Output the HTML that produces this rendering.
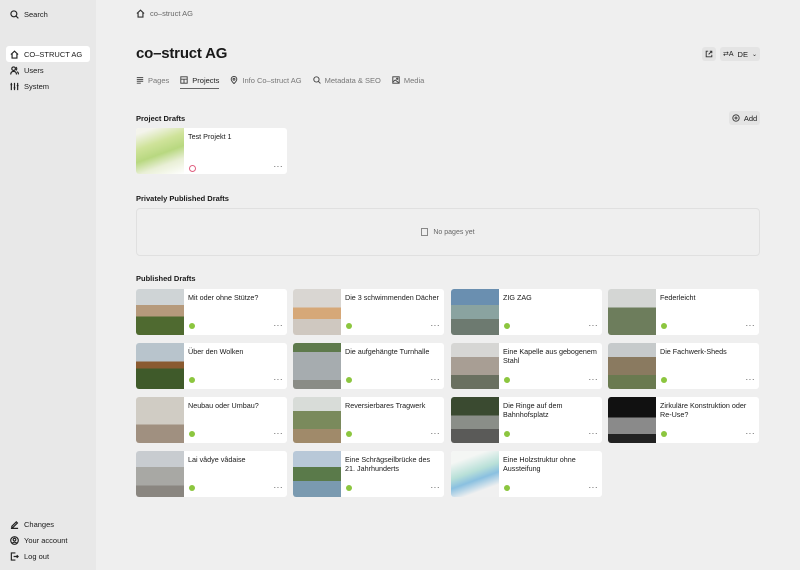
<!DOCTYPE html>
<html><head><meta charset="utf-8"><style>
*{box-sizing:border-box;margin:0;padding:0}
body{width:800px;height:570px;overflow:hidden;background:#efefef;font-family:"Liberation Sans",sans-serif;color:#1a1a1a;position:relative;font-size:8px}
.side{position:absolute;left:0;top:0;width:96px;height:570px;background:#e8e8e8}
.si{position:absolute;left:6px;height:16px;display:flex;align-items:center;gap:5px;padding-left:4px;font-size:7.5px;width:84px}
.si svg{width:9px;height:9px;stroke:#222;fill:none;stroke-width:1.3}
.act{background:#fff;border-radius:3px}
.abs{position:absolute}
h1{position:absolute;left:136px;top:45px;font-size:15px;font-weight:bold;letter-spacing:-0.2px}
.tabs{position:absolute;left:136px;top:74px;display:flex;gap:11px;font-size:7.5px;color:#777}
.tabs span{display:flex;align-items:center;gap:4px;height:12px}
.tabs svg{width:8px;height:8px;stroke:#444;fill:none;stroke-width:1.2}
.tabs .on{color:#222;border-bottom:1.5px solid #666;padding-bottom:2px;height:15px}
.sec{position:absolute;left:136px;font-size:7.5px;font-weight:bold}
.card{position:absolute;width:151px;height:46px;background:#fff;border-radius:3px;overflow:hidden}
.card .im{position:absolute;left:0;top:0;width:48px;height:46px}
.card .t{position:absolute;left:52px;top:4px;font-size:7.2px;line-height:9px;width:95px}
.card .d{position:absolute;left:53px;top:34px;width:6px;height:6px;border-radius:50%;background:#8cc63f}
.card .m{position:absolute;right:4px;top:32px;font-size:8px;letter-spacing:0.5px;color:#333}
.btn{position:absolute;background:#e4e4e4;border-radius:3px;display:flex;align-items:center;justify-content:center;font-size:7.5px;gap:4px}
</style></head><body>
<div class="side">
<div class="si" style="top:6px"><svg viewBox="0 0 10 10"><circle cx="4.3" cy="4.3" r="3.3"/><path d="M6.8 6.8L9.3 9.3"/></svg>Search</div>
<div class="si act" style="top:46px"><svg viewBox="0 0 10 10"><path d="M1 5L5 1.3 9 5M2.3 4v5h5.4V4"/></svg>CO–STRUCT AG</div>
<div class="si" style="top:62px"><svg viewBox="0 0 10 10"><circle cx="4" cy="3" r="2"/><path d="M0.8 9.5c0-2.5 1.5-3.5 3.2-3.5s3.2 1 3.2 3.5M6.5 1.3a2 2 0 010 3.5M8 6.3c1 .5 1.4 1.6 1.4 3"/></svg>Users</div>
<div class="si" style="top:78px"><svg viewBox="0 0 10 10"><path d="M1.5 1v8M5 1v8M8.5 1v8M0.5 3h2M4 6.5h2M7.5 4h2"/></svg>System</div>
<div class="si" style="top:516px"><svg viewBox="0 0 10 10"><path d="M1 9.3h8M2 7l5-5 1.3 1.3-5 5H2z"/></svg>Changes</div>
<div class="si" style="top:532px"><svg viewBox="0 0 10 10"><circle cx="5" cy="5" r="4.2"/><circle cx="5" cy="4" r="1.5"/><path d="M2.5 8c1-1.5 4-1.5 5 0"/></svg>Your account</div>
<div class="si" style="top:548px"><svg viewBox="0 0 10 10"><path d="M6 1H1.5v8H6M4 5h5M7.5 3.5L9 5 7.5 6.5"/></svg>Log out</div>
</div>
<div class="abs" style="left:136px;top:9px;font-size:7.5px;color:#666;display:flex;align-items:center;gap:5px"><svg width="9" height="9" viewBox="0 0 10 10" fill="none" stroke="#333" stroke-width="1.3"><path d="M1 5L5 1.3 9 5M2.3 4v5h5.4V4"/></svg>co–struct AG</div>
<h1>co–struct AG</h1>
<div class="btn" style="left:702px;top:47px;width:14px;height:14px"><svg width="8" height="8" viewBox="0 0 10 10" fill="none" stroke="#333" stroke-width="1.2"><path d="M4 1.5H1.5v7h7V6M6 1.5h2.5V4M8.5 1.5L4.5 5.5"/></svg></div>
<div class="btn" style="left:720px;top:47px;width:40px;height:14px"><span style="font-size:7px">⇄A</span>DE <span style="font-size:6px">⌄</span></div>
<div class="tabs">
<span><svg viewBox="0 0 10 10"><path d="M1 2h8M1 4.3h8M1 6.6h8M1 9h5"/></svg>Pages</span>
<span class="on"><svg viewBox="0 0 10 10"><rect x="1" y="1" width="8" height="8"/><path d="M1 4h8M5 4v5"/></svg>Projects</span>
<span><svg viewBox="0 0 10 10"><path d="M5 9.5S1.5 6 1.5 4a3.5 3.5 0 017 0C8.5 6 5 9.5 5 9.5z"/><circle cx="5" cy="4" r="1.2"/></svg>Info Co–struct AG</span>
<span><svg viewBox="0 0 10 10"><circle cx="4.3" cy="4.3" r="3.3"/><path d="M6.8 6.8L9.3 9.3"/></svg>Metadata &amp; SEO</span>
<span><svg viewBox="0 0 10 10"><rect x="1" y="1" width="8" height="8"/><path d="M1 7.5L4 5l4.5 3.5"/><circle cx="6.5" cy="3.5" r="0.8"/></svg>Media</span>
</div>
<div class="sec" style="top:114px">Project Drafts</div>
<div class="btn" style="left:729px;top:111px;width:31px;height:14px"><svg width="8" height="8" viewBox="0 0 10 10" fill="none" stroke="#333" stroke-width="1.1"><circle cx="5" cy="5" r="4"/><path d="M5 3v4M3 5h4"/></svg>Add</div>
<div class="card" style="left:136px;top:128px"><div class="im" style="background:linear-gradient(160deg,#f4f4ec 10%,#cfe39a 35%,#b8d880 55%,#e9efd6 75%,#fff)"></div><div class="t">Test Projekt 1</div><div class="d" style="background:none;border:1px solid #e06080;width:7px;height:7px;top:37px"></div><div class="m" style="top:34px">···</div></div>
<div class="sec" style="top:194px">Privately Published Drafts</div>
<div class="abs" style="left:136px;top:208px;width:624px;height:48px;border:1px solid #e0e0e0;border-radius:4px;display:flex;align-items:center;justify-content:center;font-size:7px;color:#666;gap:5px"><span style="display:inline-block;width:7px;height:8px;border:1px solid #888"></span>No pages yet</div>
<div class="sec" style="top:274px">Published Drafts</div>

<div class="card" style="left:136px;top:289px"><div class="im" style="background:linear-gradient(180deg,#cfd4d6 0 35%,#b69a7c 35% 60%,#4f6a30 60%)"></div><div class="t">Mit oder ohne Stütze?</div><div class="d"></div><div class="m">···</div></div>
<div class="card" style="left:293px;top:289px"><div class="im" style="background:linear-gradient(180deg,#d9d6d2 0 40%,#d6a878 40% 65%,#cfc8c0 65%)"></div><div class="t">Die 3 schwimmenden Dächer</div><div class="d"></div><div class="m">···</div></div>
<div class="card" style="left:451px;top:289px"><div class="im" style="background:linear-gradient(180deg,#6a8fb0 0 35%,#8aa3a0 35% 65%,#6d7a70 65%)"></div><div class="t">ZIG ZAG</div><div class="d"></div><div class="m">···</div></div>
<div class="card" style="left:608px;top:289px"><div class="im" style="background:linear-gradient(180deg,#d4d6d4 0 40%,#6d7d5c 40%)"></div><div class="t">Federleicht</div><div class="d"></div><div class="m">···</div></div>

<div class="card" style="left:136px;top:343px"><div class="im" style="background:linear-gradient(180deg,#b8c4cc 0 40%,#8a5a30 40% 55%,#3f5a2a 55%)"></div><div class="t">Über den Wolken</div><div class="d"></div><div class="m">···</div></div>
<div class="card" style="left:293px;top:343px"><div class="im" style="background:linear-gradient(180deg,#5e7a4c 0 20%,#a6acaf 20% 80%,#8a8c86 80%)"></div><div class="t">Die aufgehängte Turnhalle</div><div class="d"></div><div class="m">···</div></div>
<div class="card" style="left:451px;top:343px"><div class="im" style="background:linear-gradient(180deg,#d6d6d4 0 30%,#a89e94 30% 70%,#6a7060 70%)"></div><div class="t">Eine Kapelle aus gebogenem Stahl</div><div class="d"></div><div class="m">···</div></div>
<div class="card" style="left:608px;top:343px"><div class="im" style="background:linear-gradient(180deg,#c6cacb 0 30%,#8a7a60 30% 70%,#6a7a50 70%)"></div><div class="t">Die Fachwerk-Sheds</div><div class="d"></div><div class="m">···</div></div>

<div class="card" style="left:136px;top:397px"><div class="im" style="background:linear-gradient(180deg,#d0ccc4 0 60%,#a09080 60%)"></div><div class="t">Neubau oder Umbau?</div><div class="d"></div><div class="m">···</div></div>
<div class="card" style="left:293px;top:397px"><div class="im" style="background:linear-gradient(180deg,#d8dcd8 0 30%,#7a8a5c 30% 70%,#a08a6a 70%)"></div><div class="t">Reversierbares Tragwerk</div><div class="d"></div><div class="m">···</div></div>
<div class="card" style="left:451px;top:397px"><div class="im" style="background:linear-gradient(180deg,#3a4a30 0 40%,#8a8e88 40% 70%,#5a5a58 70%)"></div><div class="t">Die Ringe auf dem Bahnhofsplatz</div><div class="d"></div><div class="m">···</div></div>
<div class="card" style="left:608px;top:397px"><div class="im" style="background:linear-gradient(180deg,#111 0 45%,#8a8a8a 45% 80%,#222 80%)"></div><div class="t">Zirkuläre Konstruktion oder Re-Use?</div><div class="d"></div><div class="m">···</div></div>

<div class="card" style="left:136px;top:451px"><div class="im" style="background:linear-gradient(180deg,#c8ccd0 0 35%,#a8a8a4 35% 75%,#8a8680 75%)"></div><div class="t">Lai vâdye vâdaise</div><div class="d"></div><div class="m">···</div></div>
<div class="card" style="left:293px;top:451px"><div class="im" style="background:linear-gradient(180deg,#b8c8d8 0 35%,#5a7a4a 35% 65%,#7a9ab0 65%)"></div><div class="t">Eine Schrägseilbrücke des 21. Jahrhunderts</div><div class="d"></div><div class="m">···</div></div>
<div class="card" style="left:451px;top:451px"><div class="im" style="background:linear-gradient(160deg,#f4f6f4 20%,#b8e0d8 45%,#8ac0e0 60%,#f0f0f0 80%)"></div><div class="t">Eine Holzstruktur ohne Aussteifung</div><div class="d"></div><div class="m">···</div></div>
</body></html>
